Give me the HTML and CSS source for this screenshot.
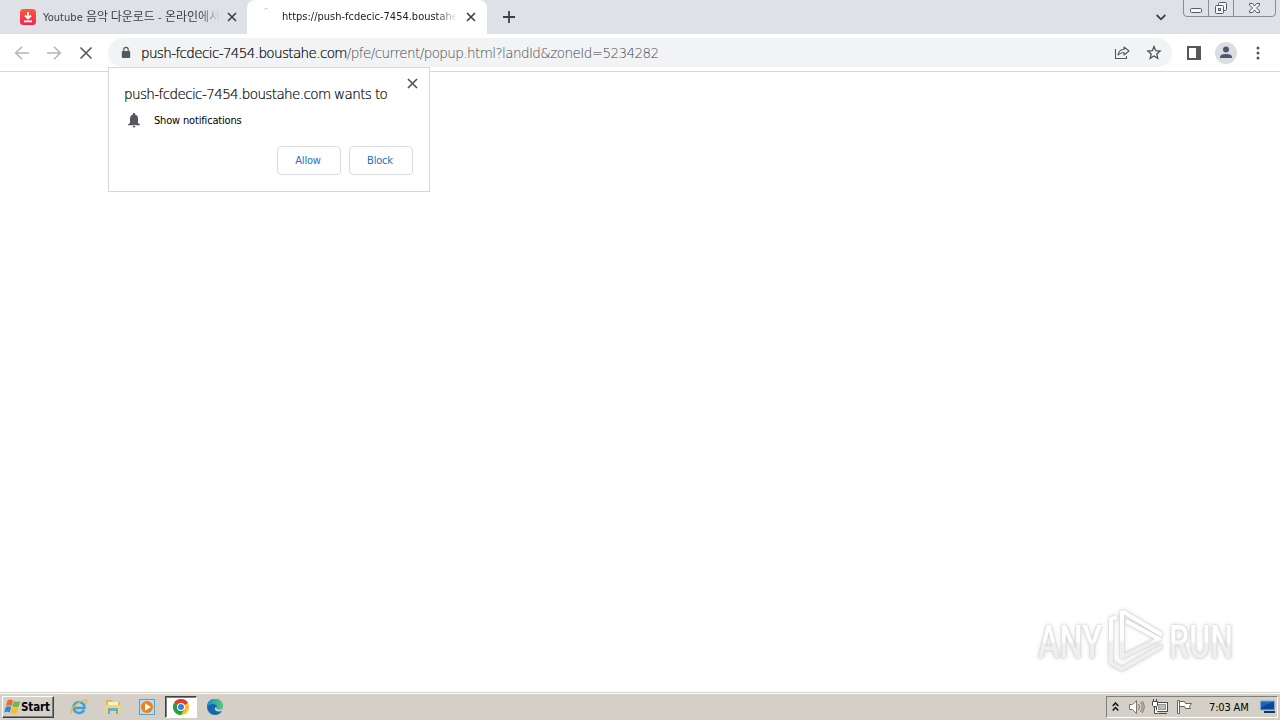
FILE: index.html
```html
<!DOCTYPE html>
<html lang="en">
<head>
<meta charset="utf-8">
<title>Browser</title>
<link rel="stylesheet" href="styles.css">
</head>
<body>
<div class="screen">
  <header class="tabstrip">
    <div class="tab">
      <svg class="favicon" width="16" height="16" viewBox="0 0 16 16"><defs><linearGradient id="fav" x2="0" y2="1"><stop stop-color="#ff5a35"/><stop offset="1" stop-color="#f12352"/></linearGradient></defs><rect width="16" height="16" rx="3.5" fill="url(#fav)"/><path d="M8 3v6M5 6.500l3 3 3-3M4 12.300h8" fill="none" stroke="#fff" stroke-width="1.800"/></svg>
      <span class="tab-title tab-title-one">Youtube <span class="korean">음악 다운로드</span> - <span class="korean">온라인에서</span></span>
      <svg class="tab-close" width="10" height="10" viewBox="0 0 10 10"><path d="M1 1l8 8M9 1L1 9" stroke="#3c4043" stroke-width="1.600"/></svg>
    </div>
    <div class="tab tab-active">
      <svg class="favicon" width="16" height="16" viewBox="0 0 16 16"><path d="M1 3.500Q3 1.500 5 2.500" fill="none" stroke="#d0d2d5"/></svg>
      <span class="tab-title tab-title-two">https://push-fcdecic-7454.boustahe</span>
      <svg class="tab-close" width="10" height="10" viewBox="0 0 10 10"><path d="M1 1l8 8M9 1L1 9" stroke="#3c4043" stroke-width="1.600"/></svg>
    </div>
    <svg class="new-tab" width="12" height="12" viewBox="0 0 12 12"><path d="M6 0v12M0 6h12" stroke="#3c4043" stroke-width="1.800"/></svg>
    <svg class="tab-search" width="10" height="7" viewBox="0 0 10 7"><path d="M.7 1L5 5.300 9.300 1" fill="none" stroke="#3c4043" stroke-width="1.800"/></svg>
    <svg class="window-buttons" width="94" height="18" viewBox="0 0 94 18"><path d="M.5 0v13q0 3.500 3.500 3.500h85q3.500 0 3.500-3.500V0M25.500 0v16M50.500 0v16" fill="none" stroke="#8a8d94"/><g fill="#f5f6f8" stroke="#555b65"><rect x="7.500" y="8.500" width="11" height="4" rx="1"/><rect x="35.500" y="2.500" width="8" height="8" rx="1"/><rect x="32.500" y="5.500" width="8" height="8" rx="1"/><rect x="35.500" y="8.500" width="2" height="2"/><path d="M66.500 3.500h3l2 2.500 2-2.500h3v1.500L73.500 8l3 3v1.500h-3l-2-2.500-2 2.500h-3V11l3-3-3-3z"/></g></svg>
  </header>
  <nav class="toolbar">
    <div class="nav-buttons">
      <svg width="16" height="16" viewBox="0 0 16 16"><path d="M15 8H2M8 1.700L1.700 8 8 14.300" fill="none" stroke="#b5b7ba" stroke-width="1.600"/></svg>
      <svg width="16" height="16" viewBox="0 0 16 16"><path d="M1 8h13M8 1.700L14.300 8 8 14.300" fill="none" stroke="#b5b7ba" stroke-width="1.600"/></svg>
      <svg width="16" height="16" viewBox="0 0 16 16"><path d="M2.500 2.500l11 11M13.500 2.500l-11 11" stroke="#55585c" stroke-width="1.600"/></svg>
    </div>
    <div class="omnibox">
      <svg class="lock" width="10" height="14" viewBox="0 0 10 14"><rect x=".8" y="5" width="8.400" height="7" rx="1" fill="#55585c"/><path d="M2.800 5.500V3.500a2.200 2.200 0 0 1 4.400 0v2" fill="none" stroke="#55585c" stroke-width="1.200"/></svg>
      <div class="url"><span class="url-host">push-fcdecic-7454.boustahe.com</span><span class="url-path">/pfe/current/popup.html?landId&amp;zoneId=5234282</span></div>
      <svg class="share" width="16" height="16" viewBox="0 0 16 16" fill="none" stroke="#55585c" stroke-width="1.100"><path d="M1.500 4v9.500h11V11"/><path d="M4 10Q5 4.500 10 4.500V2l5 4-5 4V7.500Q6.500 7.500 4 10z" stroke-linejoin="round"/></svg>
      <svg class="star" width="16" height="16" viewBox="0 0 16 16"><path d="M8 1.600l1.700 4.100 4.400.4-3.300 2.900 1 4.300L8 11l-3.800 2.300 1-4.300-3.300-2.900 4.400-.4z" fill="none" stroke="#505358" stroke-width="1.300"/></svg>
    </div>
    <svg class="side-panel" width="14" height="14" viewBox="0 0 14 14"><path d="M0 0h14v14H0zM2 2v10h7V2z" fill="#55585c" fill-rule="evenodd"/></svg>
    <svg class="profile" width="22" height="22" viewBox="0 0 22 22"><circle cx="11" cy="11" r="11" fill="#dadde2"/><circle cx="11" cy="7.500" r="3" fill="#4d5870"/><path d="M5 16v-1q0-3 6-3t6 3v1z" fill="#4d5870"/></svg>
    <svg class="more" width="4" height="14" viewBox="0 0 4 14" fill="#505358"><circle cx="2" cy="2" r="1.500"/><circle cx="2" cy="7" r="1.500"/><circle cx="2" cy="12" r="1.500"/></svg>
  </nav>
  <main class="page">
    <svg class="watermark" width="220" height="80" viewBox="0 0 220 80">
      <defs><linearGradient id="wm" x2="0" y2="1"><stop offset=".48" stop-color="#fff"/><stop offset=".55" stop-color="#efefef"/></linearGradient></defs>
      <g class="watermark-ink">
        <text class="watermark-text" x="13" y="58" textLength="64" lengthAdjust="spacingAndGlyphs">ANY</text>
        <text class="watermark-text" x="144" y="58" textLength="64" lengthAdjust="spacingAndGlyphs">RUN</text>
        <path d="M97 11L137 35M97 11V57L134 39L101 21M92 17L86 19V63L97 69L137 46" fill="none" stroke="url(#wm)" stroke-width="4" stroke-linejoin="round"/>
      </g>
    </svg>
  </main>
  <section class="prompt">
    <svg class="prompt-close" width="11" height="11" viewBox="0 0 11 11"><path d="M1 1l9 9M10 1l-9 9" stroke="#505358" stroke-width="1.700"/></svg>
    <div class="prompt-title">push-fcdecic-7454.boustahe.com wants to</div>
    <div class="prompt-row">
      <svg width="12" height="16" viewBox="0 0 12 16"><path d="M5 1h2v1.500q3 .8 3 4V11l2 1.500v.7H0v-.7L2 11V6.500q0-3.200 3-4zM4.500 14h3q-.5 1.500-1.500 1.500T4.500 14z" fill="#55585c"/></svg>
      <span>Show notifications</span>
    </div>
    <div class="prompt-actions"><button class="button">Allow</button><button class="button">Block</button></div>
  </section>
  <footer class="taskbar">
    <button class="start"><svg width="17" height="16" viewBox="0 0 17 16"><path d="M3.500 1.500q3-2 5.500 0L7.500 7Q5 5.500 2 7z" fill="#ee6a2c"/><path d="M9.800 2q3 1.500 6.500 0L14.700 7.500q-3 1.500-6.500 0z" fill="#72b64a"/><path d="M1.700 8q3-1.500 5.500 0l-1.500 5.500Q3.200 12 .2 13.500z" fill="#3785cf"/><path d="M8 8.500q3 1.500 6.500 0L13 14q-3 1.500-6.500 0z" fill="#f5bd32"/></svg><span>Start</span></button>
    <div class="launch">
      <span class="app"><svg width="18" height="18" viewBox="0 0 18 18"><path d="M14 12Q12.500 15 9 15a5.500 5.500 0 1 1 5.500-5H5" fill="none" stroke="#38a1df" stroke-width="2.600"/><path d="M2 15.500Q-1 14 4 8.500 12 1 16 2q2 1-1 4.500" fill="none" stroke="#e9b943" stroke-width="1.400"/></svg></span>
      <span class="app"><svg width="18" height="18" viewBox="0 0 18 18"><path d="M2 2h6l1 2h7v10H2z" fill="#dfba52"/><path d="M4 4h10v5H4z" fill="#fff2bd"/><path d="M1 7h16l-1 8H2z" fill="#f1d578"/><path d="M4 16v-5q0-1 1-1h8q1 0 1 1v5h-2v-3H6v3z" fill="#61add9"/></svg></span>
      <span class="app"><svg width="18" height="18" viewBox="0 0 18 18"><rect x="1.500" y="1.500" width="15" height="15" fill="#b9dcf2" stroke="#5b9fca"/><circle cx="9" cy="9" r="6" fill="#f07f16"/><path d="M7 5.200v7.600l6-3.800z" fill="#fff"/></svg></span>
      <span class="app app-active"><svg width="16" height="16" viewBox="0 0 16 16"><circle cx="8" cy="8" r="8" fill="#fbc116"/><path d="M8 8L1.070 4A8 8 0 0 1 14.930 4z" fill="#e33b2e"/><path d="M8 8L1.070 4A8 8 0 0 0 8 16l3.500-6z" fill="#269e4b"/><circle cx="8" cy="8" r="4" fill="#fff"/><circle cx="8" cy="8" r="3" fill="#397de8"/></svg></span>
      <span class="app"><svg width="16" height="16" viewBox="0 0 16 16"><defs><linearGradient id="edge"><stop stop-color="#168bd2"/><stop offset="1" stop-color="#55cf70"/></linearGradient></defs><circle cx="8" cy="8" r="8" fill="#1267ae"/><path d="M0 8a8 8 0 0 1 16-1q0 3-3.500 3.500-4 .2-2.500-2Q10 5 6 5 2 5 0 8z" fill="url(#edge)"/><path d="M8 8.500Q7 12 11 12.500q3 .2 4.500-1L16 8q-1 2.500-4 2.500-3.500 0-2-2.200z" fill="#d4d0c8"/></svg></span>
    </div>
    <div class="tray">
      <svg class="chevrons" width="7" height="10" viewBox="0 0 7 10"><path d="M.7 4l2.800-3 2.800 3M.7 8.500l2.800-3 2.800 3" fill="none" stroke="#111" stroke-width="1.500"/></svg>
      <svg width="18" height="16" viewBox="0 0 18 16" fill="#fff" stroke="#77746f"><path d="M1.500 5.500h3l4-4v13l-4-4h-3z"/><path d="M10.500 5q2 3 0 6M12.500 3q3.500 5 0 10M14 2q4.500 6 0 12" fill="none"/></svg>
      <svg width="18" height="16" viewBox="0 0 18 16" fill="#fff" stroke="#4d4b48"><rect x="4.500" y="3.500" width="11" height="9" fill="#fff"/><rect x="6.500" y="5.500" width="7" height="5" fill="#bbb" stroke="#999"/><path d="M7 14.500h8M2.500 8v6.500h4"/><path d="M.5 2.500h5v4l-1 1h-3l-1-1zM1.500 0v3M4.500 0v3"/></svg>
      <svg width="18" height="16" viewBox="0 0 18 16" fill="#fff" stroke="#66635f"><path d="M1.500 1.500h2v13h-2zM3.500 2.500h5l1 2h6l-2 3 1 2h-5l-1-2h-5z"/></svg>
      <span class="clock">7:03 AM</span>
      <svg class="desktop" width="16" height="14" viewBox="0 0 16 14"><path d="M.5 1h14v9H.5z" fill="#1766bf" stroke="#7ba7cd"/><path d="M1 8Q8 3 14 2v7H1z" fill="#0a4799"/><path d="M4 11h11v2H4z" fill="#16365e"/></svg>
    </div>
  </footer>
</div>
</body>
</html>
```
FILE: styles.css
```css
* { box-sizing: border-box; }
body { margin: 0; font-family: "DejaVu Sans Condensed", "DejaVu Sans", "Noto Sans CJK KR", sans-serif; font-size: 11px; color: #202124; }
svg { display: block; flex: none; }
button { font: inherit; padding: 0; }
.screen { position: relative; display: flex; flex-direction: column; width: 1280px; height: 720px; overflow: hidden; background: #fff; }
.tabstrip { display: flex; height: 34px; background: #dee1e6; }
.tab { display: flex; align-items: center; width: 247px; height: 34px; padding-left: 20px; }
.favicon { margin-right: 7px; }
.tab-title { overflow: hidden; white-space: nowrap; width: 177px; line-height: 18px; mask-image: linear-gradient(90deg, #000 88%, transparent); }
.tab-title-one { letter-spacing: .05px; color: #3c4043; }
.korean { font-family: "Noto Sans CJK KR", sans-serif; font-size: 12px; letter-spacing: 0; }
.tab-title-two { width: 175px; }
.tab-close { margin-left: 7px; }
.tab-active { width: 240px; padding-left: 16px; background: #fff; border-radius: 8px 8px 0 0; }
.tab-active .favicon { margin: -6px 3px 0 0; }
.tab-active .tab-close { margin-left: 9px; }
.new-tab { margin: 11px 0 0 16px; }
.tab-search { margin: 14px 0 0 auto; }
.window-buttons { margin: 0 3px 0 17px; }
.toolbar { display: flex; align-items: center; height: 38px; border-bottom: 1px solid #d7d9dc; }
.nav-buttons { display: flex; gap: 16px; padding-left: 14px; width: 108px; }
.omnibox { display: flex; align-items: center; width: 1064px; height: 29px; border-radius: 15px; background: #f1f3f4; padding: 0 10px 0 13px; }
.lock { margin-right: 10px; }
.url { flex: 1; font-family: "DejaVu Sans"; font-weight: 200; font-size: 13.5px; line-height: 20px; white-space: nowrap; }
.url-host { color: #000; letter-spacing: -.63px; -webkit-text-stroke: .2px #000; }
.url-path { color: #44484c; letter-spacing: -.57px; }
.share { margin-right: 16px; }
.side-panel { margin-left: 15px; }
.profile { margin-left: 14px; }
.more { margin-left: 19px; }
.page { flex: 1; display: flex; justify-content: flex-end; align-items: flex-end; padding: 0 35px 12px 0; }
.watermark { overflow: visible; }
.watermark-ink { filter: drop-shadow(0 0 1px #c4c4c4) drop-shadow(0 0 2px #e0e0e0); }
.watermark-text { font: 500 46px Roboto, sans-serif; fill: url(#wm); }
.prompt { position: absolute; left: 108px; top: 67px; width: 322px; height: 125px; border: 1px solid #d5d6d8; background: #fff; padding: 16px; }
.prompt-close { position: absolute; right: 11px; top: 10px; }
.prompt-title { margin-left: -1px; color: #000; font-family: "DejaVu Sans"; font-weight: 200; font-size: 13.5px; line-height: 20px; letter-spacing: -.61px; white-space: nowrap; -webkit-text-stroke: .2px #000; }
.prompt-row { display: flex; align-items: center; gap: 14px; margin: 8px 0 0 3px; height: 16px; color: #000; letter-spacing: -.17px; }
.prompt-actions { display: flex; justify-content: flex-end; gap: 8px; margin-top: 18px; }
.button { width: 64px; height: 29px; padding-right: 2px; border: 1px solid #d9dbdf; border-radius: 4px; background: #fff; color: #1a73b8; letter-spacing: -.2px; }
.taskbar { display: flex; align-items: center; height: 28px; border-top: 1px solid #d4d0c8; box-shadow: inset 0 1px #fff; background: #d4d0c8; padding: 1px 2px 0; }
.start { display: flex; align-items: center; gap: 0; width: 52px; height: 22px; padding-left: 1px; background: #d4d0c8; border: 1px solid; border-color: #fff #404040 #404040 #fff; box-shadow: inset -1px -1px #808080; color: #000; font-size: 11.5px; font-weight: 700; letter-spacing: -.1px; }
.launch { display: flex; gap: 2px; margin-left: 9px; }
.app { display: flex; align-items: center; justify-content: center; width: 32px; height: 22px; }
.app-active { background: #fff; border: 1px solid; border-color: #404040 #fff #fff #404040; box-shadow: inset 1px 1px #808080; }
.tray { display: flex; align-items: center; width: 172px; height: 22px; margin-left: auto; padding-left: 5px; border: 1px solid; border-color: #808080 #fff #fff #808080; gap: 6px; }
.chevrons { margin-right: 3px; }
.clock { width: 41px; margin-left: 9px; color: #000; letter-spacing: -.15px; white-space: nowrap; }
.desktop { margin-left: 4px; }
```
